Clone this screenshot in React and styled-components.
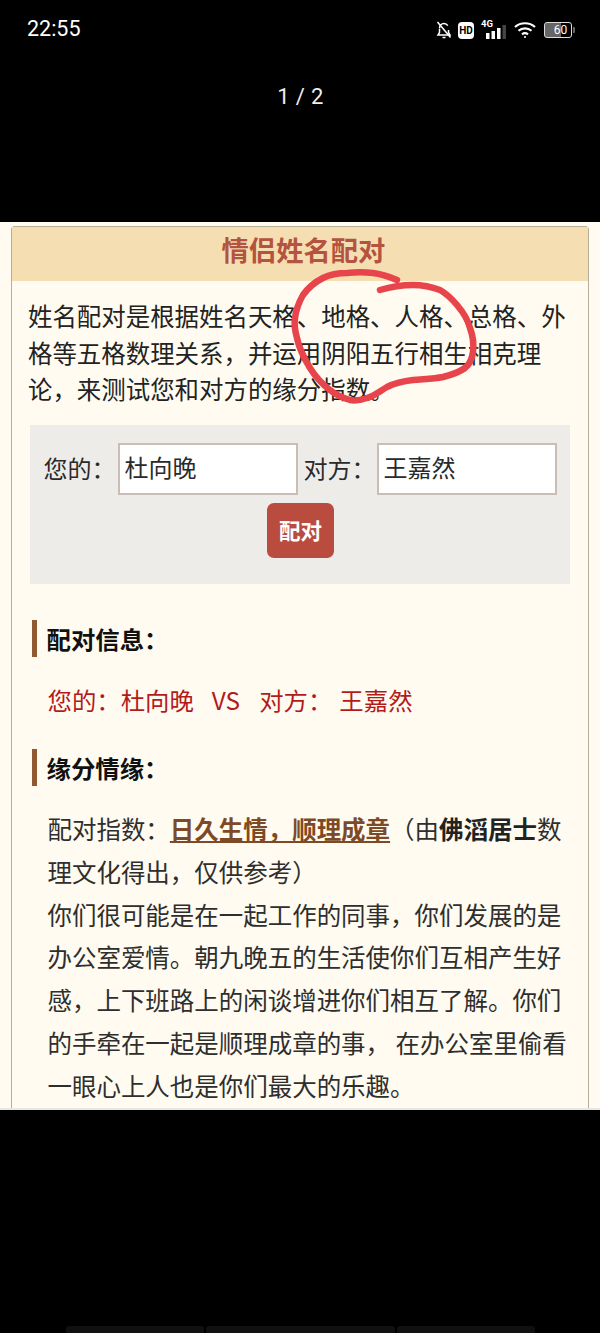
import React from 'react';
import styled, { createGlobalStyle } from 'styled-components';

const cjk = '"Noto Sans CJK SC", "Noto Sans", sans-serif';

const GlobalStyle = createGlobalStyle`
  html, body {
    margin: 0;
    padding: 0;
    background: #000;
  }
  * {
    box-sizing: border-box;
  }
`;

const Phone = styled.div`
  width: 600px;
  height: 1333px;
  overflow: hidden;
  display: flex;
  flex-direction: column;
  background: #000;
  font-family: ${cjk};
`;

const TopArea = styled.header`
  height: 222px;
  flex: none;
  padding: 15px 26px 0 27px;
  color: #fff;
`;

const StatusBar = styled.div`
  display: flex;
  justify-content: space-between;
  align-items: center;
  height: 27px;
`;

const Clock = styled.span`
  font-family: Roboto, sans-serif;
  font-size: 21.5px;
  line-height: 27px;
`;

const StatusIcons = styled.div`
  display: flex;
  align-items: center;
  margin-top: 3px;
`;

const HdBadge = styled.span`
  width: 16px;
  height: 17px;
  margin-left: 6px;
  border-radius: 4px;
  background: #fff;
  color: #000;
  display: flex;
  align-items: center;
  justify-content: center;
  font: 700 10px/17px Roboto, sans-serif;
`;

const Signal = styled.div`
  position: relative;
  width: 26px;
  height: 20px;
  margin: 0 7px 0 7px;
`;

const SignalLabel = styled.span`
  position: absolute;
  left: 0;
  top: -2px;
  font: 700 9.5px/12px Roboto, sans-serif;
`;

const Battery = styled.div`
  width: 28px;
  height: 16px;
  margin-left: 8px;
  margin-right: 2px;
  border: 1.3px solid #ddd;
  border-radius: 3px;
  padding-left: 5px;
  background: linear-gradient(to right, #666 0 60%, transparent 60%);
  font: 400 12px/14px Roboto, sans-serif;
  text-align: center;
  position: relative;
  &::after {
    content: '';
    position: absolute;
    right: -3.5px;
    top: 4px;
    width: 2px;
    height: 6px;
    background: #666;
    border-radius: 0 1px 1px 0;
  }
`;

const Counter = styled.div`
  margin-top: 41px;
  text-align: center;
  font: 400 22px/27px Roboto, sans-serif;
  letter-spacing: 0.4px;
  color: #eee;
`;

const Page = styled.main`
  position: relative;
  height: 888px;
  flex: none;
  overflow: hidden;
  padding: 4px 11px 0;
  background: #fffbf0;
  border-bottom: 2px solid #e9e7e2;
`;

const Card = styled.section`
  height: 100%;
  border: 1.5px solid #b5ae98;
  border-bottom: none;
  border-radius: 4px 4px 0 0;
`;

const CardTitle = styled.h1`
  margin: 0;
  height: 54px;
  padding-left: 7px;
  background: #f5dfb2;
  color: #b4533f;
  text-align: center;
  font-size: 27.3px;
  font-weight: 700;
  line-height: 45px;
`;

const Intro = styled.p`
  margin: 0;
  padding: 17px 16px 0;
  color: #222;
  font-size: 24.45px;
  line-height: 36.7px;
  height: 144px;
`;

const FormPanel = styled.form`
  margin: 0 18px 0 17.5px;
  height: 159px;
  padding: 18px 14px 0 14px;
  background: #eeece9;
`;

const FormRow = styled.div`
  display: flex;
  align-items: center;
  height: 52px;
`;

const FieldLabel = styled.label`
  flex: none;
  width: ${(p) => p.$width}px;
  margin-left: ${(p) => p.$offset || 0}px;
  padding-bottom: 4px;
  color: #2a2a2a;
  font-size: 24px;
  white-space: nowrap;
`;

const NameInput = styled.input`
  width: 180px;
  height: 52px;
  padding: 0 4px 5px 5px;
  flex: none;
  border: 2px solid #c9bdb5;
  background: #fff;
  color: #2a2a2a;
  font-family: ${cjk};
  font-size: 24px;
  border-radius: 0;
  outline: none;
`;

const SubmitButton = styled.button`
  display: block;
  width: 67px;
  height: 55px;
  margin: 8px 0 0 223.5px;
  padding: 0 0 3px;
  border: none;
  border-radius: 7px;
  background: #b94c3f;
  color: #fff;
  font-family: ${cjk};
  font-size: 21.5px;
  font-weight: 700;
`;

const SectionTitle = styled.h2`
  margin: ${(p) => p.$top}px 0 0 19.5px;
  height: 37px;
  padding-left: 10px;
  border-left: 5px solid #8f5a30;
  color: #111;
  font-size: 24.4px;
  font-weight: 700;
  line-height: 37px;
`;

const MatchLine = styled.p`
  margin: 24px 0 0 35.5px;
  height: 41px;
  color: #b31b1b;
  font-size: 24.4px;
  line-height: 38px;
  white-space: nowrap;
`;

const Versus = styled.span`
  margin: 0 19px 0 18px;
`;

const MatchName = styled.span`
  margin-left: 7px;
`;

const Body = styled.div`
  margin: 22px 0 0 35.5px;
  width: 522px;
  color: #2e2e2e;
  font-size: 24.47px;
  line-height: 42.8px;
`;

const FateLink = styled.a`
  color: #7d4a25;
  font-weight: 700;
  text-decoration: underline;
`;

const Strong = styled.b`
  color: #222;
  font-weight: 700;
`;

const InkMark = styled.svg`
  position: absolute;
  left: 0;
  top: 0;
  pointer-events: none;
`;

const BottomArea = styled.footer`
  flex: 1;
  display: flex;
  align-items: flex-end;
  justify-content: center;
  gap: 2px;
  margin-left: 1px;
`;

const BottomTab = styled.span`
  width: ${(p) => p.$width}px;
  height: 7px;
  background: #101010;
  border-radius: 3px 3px 0 0;
`;

const BellOff = () => (
  <svg width="16" height="20" viewBox="0 0 16 20" fill="none" stroke="#fff" strokeWidth="1.5">
    <path d="M3.500 8.500C3.500 5.500 5.500 3.500 8 3.500c1.600 0 3 .8 3.800 2.200M12.500 10v2.500l1.500 2.500H2l1.500-2.500V9" />
    <path d="M6.500 17.500h3" />
    <path d="M1.500 2l13 15.500" />
  </svg>
);

const SignalBars = () => (
  <svg width="26" height="20" viewBox="0 0 26 20" style={{ display: 'block' }}>
    <rect x="5" y="13" width="3.500" height="6" fill="#fff" />
    <rect x="10.500" y="11" width="3.500" height="8" fill="#fff" />
    <rect x="16" y="8" width="3.500" height="11" fill="#fff" />
    <rect x="21.500" y="5" width="3.500" height="14" fill="#444" />
  </svg>
);

const Wifi = () => (
  <svg width="22" height="18" viewBox="0 0 22 18" fill="none" stroke="#fff" strokeWidth="2.200">
    <path d="M1 6c5.500-5 14.500-5 20 0" />
    <path d="M4.500 9.800c3.600-3.200 9.400-3.200 13 0" />
    <path d="M8 13.300c1.800-1.400 4.200-1.400 6 0" />
    <circle cx="11" cy="16" r="1" fill="#fff" stroke="none" />
  </svg>
);

export default function App() {
  return (
    <Phone>
      <GlobalStyle />
      <TopArea>
        <StatusBar>
          <Clock>22:55</Clock>
          <StatusIcons>
            <BellOff />
            <HdBadge>HD</HdBadge>
            <Signal>
              <SignalLabel>4G</SignalLabel>
              <SignalBars />
            </Signal>
            <Wifi />
            <Battery>60</Battery>
          </StatusIcons>
        </StatusBar>
        <Counter>1 / 2</Counter>
      </TopArea>

      <Page>
        <Card>
          <CardTitle>情侣姓名配对</CardTitle>
          <Intro>
            姓名配对是根据姓名天格、地格、人格、总格、外格等五格数理关系，并运用阴阳五行相生相克理论，来测试您和对方的缘分指数。
          </Intro>
          <FormPanel>
            <FormRow>
              <FieldLabel $width={74}>您的：</FieldLabel>
              <NameInput defaultValue="杜向晚" />
              <FieldLabel $width={73} $offset={6}>对方：</FieldLabel>
              <NameInput defaultValue="王嘉然" />
            </FormRow>
            <SubmitButton type="button">配对</SubmitButton>
          </FormPanel>
          <SectionTitle $top={36}>配对信息：</SectionTitle>
          <MatchLine>
            您的：杜向晚<Versus>VS</Versus>对方：<MatchName>王嘉然</MatchName>
          </MatchLine>
          <SectionTitle $top={27}>缘分情缘：</SectionTitle>
          <Body>
            配对指数：<FateLink>日久生情，顺理成章</FateLink>（由<Strong>佛滔居士</Strong>数理文化得出，仅供参考）
            <br />
            你们很可能是在一起工作的同事，你们发展的是办公室爱情。朝九晚五的生活使你们互相产生好感，上下班路上的闲谈增进你们相互了解。你们的手牵在一起是顺理成章的事， 在办公室里偷看一眼心上人也是你们最大的乐趣。
          </Body>
        </Card>
        <InkMark width="600" height="888" viewBox="0 222 600 888" fill="none">
          <path
            d="M380 290C390 287 402 285 413 285C423 285 432 287 440 290C447 294 452 299 457 305C463 312 468 320 470 328C473 336 474 344 473 352C472 359 470 364 465 368C458 373 451 375 443 377C433 379 423 379 413 380C404 381 395 383 387 387C380 391 374 396 367 398C361 400 355 401 350 400C343 398 336 395 330 390C322 384 315 376 310 368C304 358 299 348 297 338C295 331 294 325 295 318C296 310 299 302 303 295C308 288 315 282 323 278C331 274 339 273 347 273C356 272 365 272 373 273C382 274 390 277 397 280"
            stroke="#e8444c"
            strokeWidth="6.5"
            strokeLinecap="round"
            strokeLinejoin="round"
          />
        </InkMark>
      </Page>

      <BottomArea>
        <BottomTab $width={138} />
        <BottomTab $width={189} />
        <BottomTab $width={138} />
      </BottomArea>
    </Phone>
  );
}
